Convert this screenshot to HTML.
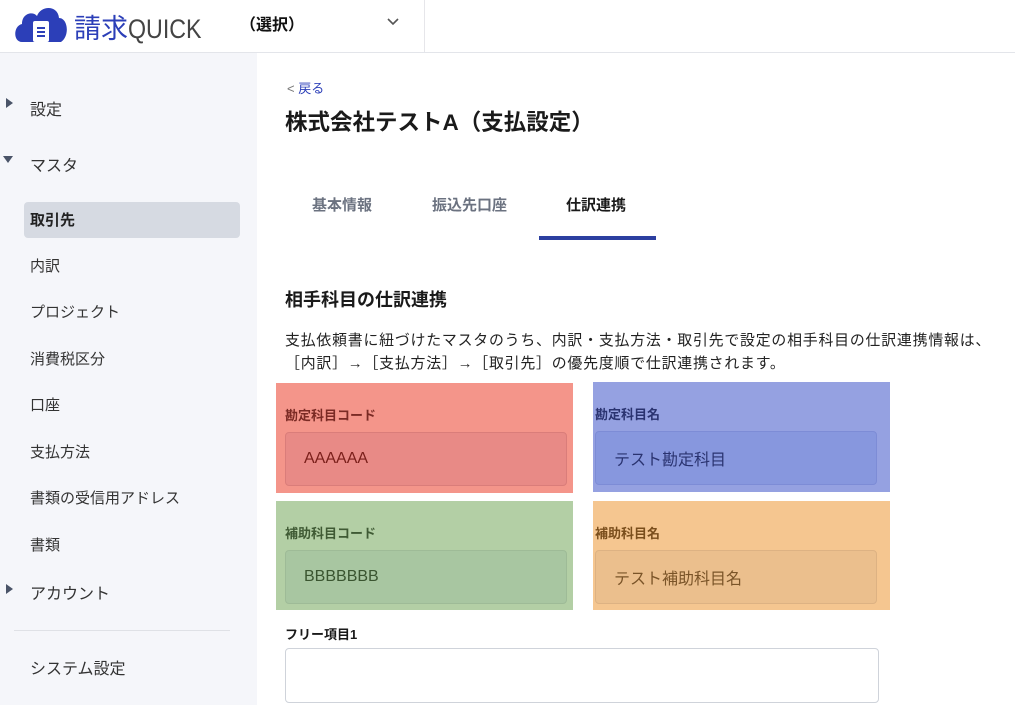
<!DOCTYPE html>
<html><head><meta charset="utf-8"><style>
*{margin:0;padding:0;box-sizing:border-box}
body{width:1015px;height:705px;overflow:hidden;background:#fff;font-family:"Liberation Sans","Noto Sans CJK JP",sans-serif;color:#222;position:relative}
.abs{position:absolute;white-space:nowrap}
.hdr{position:absolute;left:0;top:0;width:1015px;height:53px;border-bottom:1px solid #e3e5ea;background:#fff}
.side{position:absolute;left:0;top:53px;width:257px;height:652px;background:#f5f6fa}
.nav{font-size:16px;color:#333}
.sub{font-size:15px;color:#333}
.box{position:absolute;width:297px;height:110px}
.lbl{position:absolute;left:9px;top:22px;font-size:13px;font-weight:bold}
.inp{position:absolute;left:9px;top:49px;width:282px;height:54px;border-radius:4px;font-size:16px;padding:17px 0 0 18px}
.cj{padding-top:14px}
</style></head><body>
<div class="hdr">
<svg class="abs" style="left:14px;top:4px" width="54" height="38" viewBox="0 0 54 38"><path d="M8 38 C-1 38 -1 22 8 20 C8 9 19 7 23 12 C27 1 44 1 45 14 C54 14 56 32 47 38 Z" fill="#2c3fb8"/><rect x="19" y="17" width="16" height="21" rx="2" fill="#fff"/><rect x="23" y="23" width="8" height="2" fill="#2c3fb8"/><rect x="23" y="27" width="8" height="2" fill="#2c3fb8"/><rect x="23" y="31" width="8" height="2" fill="#2c3fb8"/></svg>
<div class="abs" style="left:74px;top:7px;font-size:27px;color:#2c3fb8">請求<span style="color:#444;display:inline-block;transform:scaleX(0.86);transform-origin:left">QUICK</span></div>
<div class="abs" style="left:240px;top:11px;font-size:16px;font-weight:bold;color:#111">（選択）</div>
<svg class="abs" style="left:386px;top:16px" width="14" height="10" viewBox="0 0 14 10"><path d="M2 3 L7 8 L12 3" stroke="#555" stroke-width="1.6" fill="none"/></svg>
<div class="abs" style="left:424px;top:0;width:1px;height:52px;background:#e6e6ea"></div>
</div>
<div class="side">
<svg class="abs" style="left:6px;top:45px" width="8" height="10"><path d="M0 0 L7 5 L0 10Z" fill="#4a5468"/></svg>
<div class="abs nav" style="left:30px;top:43px">設定</div>
<svg class="abs" style="left:3px;top:103px" width="10" height="8"><path d="M0 0 L10 0 L5 7Z" fill="#4a5468"/></svg>
<div class="abs nav" style="left:30px;top:99px">マスタ</div>
<div class="abs" style="left:24px;top:149px;width:216px;height:36px;background:#d6dae2;border-radius:4px"></div>
<div class="abs sub" style="left:30px;top:156px;font-weight:bold;color:#222">取引先</div>
<div class="abs sub" style="left:30px;top:202px">内訳</div>
<div class="abs sub" style="left:30px;top:248px">プロジェクト</div>
<div class="abs sub" style="left:30px;top:295px">消費税区分</div>
<div class="abs sub" style="left:30px;top:341px">口座</div>
<div class="abs sub" style="left:30px;top:388px">支払方法</div>
<div class="abs sub" style="left:30px;top:434px">書類の受信用アドレス</div>
<div class="abs sub" style="left:30px;top:481px">書類</div>
<svg class="abs" style="left:6px;top:531px" width="8" height="10"><path d="M0 0 L7 5 L0 10Z" fill="#4a5468"/></svg>
<div class="abs nav" style="left:30px;top:527px">アカウント</div>
<div class="abs" style="left:14px;top:577px;width:216px;height:1px;background:#dfe1e6"></div>
<div class="abs nav" style="left:30px;top:602px">システム設定</div>
</div>
<div class="abs" style="left:287px;top:78px;font-size:13px;color:#2c3fb8"><span style="color:#777">&lt;</span> 戻る</div>
<div class="abs" style="left:285px;top:105px;font-size:22.5px;font-weight:bold;color:#1a1a1a">株式会社テストA（支払設定）</div>
<div class="abs" style="left:312px;top:194px;font-size:15px;font-weight:bold;color:#6b7280">基本情報</div>
<div class="abs" style="left:432px;top:194px;font-size:15px;font-weight:bold;color:#6b7280">振込先口座</div>
<div class="abs" style="left:566px;top:194px;font-size:15px;font-weight:bold;color:#1a1a1a">仕訳連携</div>
<div class="abs" style="left:539px;top:236px;width:117px;height:4px;background:#2c3fa0"></div>
<div class="abs" style="left:285px;top:286px;font-size:18px;font-weight:bold;color:#1a1a1a">相手科目の仕訳連携</div>
<div class="abs" style="left:285px;top:330px;font-size:14.9px;line-height:23px;letter-spacing:0.8px;color:#222">支払依頼書に紐づけたマスタのうち、内訳・支払方法・取引先で設定の相手科目の仕訳連携情報は、<br>［内訳］→［支払方法］→［取引先］の優先度順で仕訳連携されます。</div>
<div class="box" style="left:276px;top:383px;background:#f4958a"><div class="lbl" style="color:#7a2a24">勘定科目コード</div><div class="inp" style="background:#e88a86;border:1px solid #da7d7a;color:#7a1f1a">AAAAAA</div></div>
<div class="box" style="left:593px;top:382px;background:#95a1e1"><div class="lbl" style="left:2px;color:#2a3370">勘定科目名</div><div class="inp cj" style="left:2px;background:#8797de;border:1px solid #7d8cd6;color:#2a3370">テスト勘定科目</div></div>
<div class="box" style="left:276px;top:501px;height:109px;background:#b3cfa5"><div class="lbl" style="color:#3f5a34">補助科目コード</div><div class="inp" style="background:#a8c6a1;border:1px solid #9ebb97;color:#3a5530">BBBBBBB</div></div>
<div class="box" style="left:593px;top:501px;height:109px;background:#f5c690"><div class="lbl" style="left:2px;color:#7a4e1c">補助科目名</div><div class="inp cj" style="left:2px;background:#ebbf8d;border:1px solid #ddb283;color:#7a5428">テスト補助科目名</div></div>
<div class="abs" style="left:285px;top:624px;font-size:13px;font-weight:bold;color:#1a1a1a">フリー項目1</div>
<div class="abs" style="left:285px;top:648px;width:594px;height:55px;border:1px solid #cfd3da;border-radius:4px"></div>
</body></html>
